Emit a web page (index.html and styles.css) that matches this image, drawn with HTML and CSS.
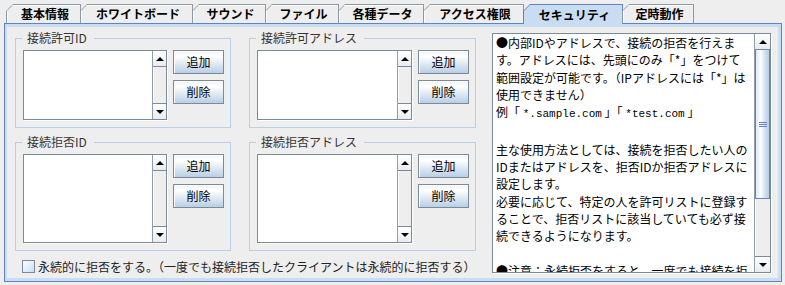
FILE: index.html
```html
<!DOCTYPE html>
<html lang="ja">
<head>
<meta charset="utf-8">
<title>セキュリティ</title>
<link rel="stylesheet" href="styles.css">
</head>
<body>
<div class="tabs">
  <div class="tab t1"><span>基本情報</span></div>
  <div class="tab t2"><span>ホワイトボード</span></div>
  <div class="tab t3"><span>サウンド</span></div>
  <div class="tab t4"><span>ファイル</span></div>
  <div class="tab t5"><span>各種データ</span></div>
  <div class="tab t6"><span>アクセス権限</span></div>
  <div class="tab t7 sel"><span>セキュリティ</span></div>
  <div class="tab t8"><span>定時動作</span></div>
</div>
<div class="panel">
  <div class="left">
    <div class="grid">
      <fieldset class="group">
        <legend>接続許可ID</legend>
        <div class="list">
          <div class="list-body"></div>
          <div class="vscroll"><div class="sb-btn"><i class="up"></i></div><div class="sb-track"></div><div class="sb-btn down-btn"><i class="down"></i></div></div>
        </div>
        <div class="btns"><button class="btn">追加</button><button class="btn">削除</button></div>
      </fieldset>
      <fieldset class="group">
        <legend>接続許可アドレス</legend>
        <div class="list">
          <div class="list-body"></div>
          <div class="vscroll"><div class="sb-btn"><i class="up"></i></div><div class="sb-track"></div><div class="sb-btn down-btn"><i class="down"></i></div></div>
        </div>
        <div class="btns"><button class="btn">追加</button><button class="btn">削除</button></div>
      </fieldset>
      <fieldset class="group">
        <legend>接続拒否ID</legend>
        <div class="list">
          <div class="list-body"></div>
          <div class="vscroll"><div class="sb-btn"><i class="up"></i></div><div class="sb-track"></div><div class="sb-btn down-btn"><i class="down"></i></div></div>
        </div>
        <div class="btns"><button class="btn">追加</button><button class="btn">削除</button></div>
      </fieldset>
      <fieldset class="group">
        <legend>接続拒否アドレス</legend>
        <div class="list">
          <div class="list-body"></div>
          <div class="vscroll"><div class="sb-btn"><i class="up"></i></div><div class="sb-track"></div><div class="sb-btn down-btn"><i class="down"></i></div></div>
        </div>
        <div class="btns"><button class="btn">追加</button><button class="btn">削除</button></div>
      </fieldset>
    </div>
    <label class="check"><span class="cb"></span><span class="check-text">永続的に拒否をする。（一度でも接続拒否したクライアントは永続的に拒否する）</span></label>
  </div>
  <div class="memo">
    <div class="memo-text">
      <div>●内部IDやアドレスで、接続の拒否を行えま</div>
      <div>す。アドレスには、先頭にのみ「*」をつけて</div>
      <div>範囲設定が可能です。（IPアドレスには「*」は</div>
      <div>使用できません）</div>
      <div>例「&nbsp;<span class="mono">*.sample.com</span>&nbsp;」「&nbsp;<span class="mono">*test.com</span>&nbsp;」</div>
      <div>&nbsp;</div>
      <div>主な使用方法としては、接続を拒否したい人の</div>
      <div>IDまたはアドレスを、拒否IDか拒否アドレスに</div>
      <div>設定します。</div>
      <div>必要に応じて、特定の人を許可リストに登録す</div>
      <div>ることで、拒否リストに該当していても必ず接</div>
      <div>続できるようになります。</div>
      <div>&nbsp;</div>
      <div>●注意：永続拒否をすると、一度でも接続を拒</div>
    </div>
    <div class="vscroll big">
      <div class="sb-btn"><i class="up"></i></div>
      <div class="thumb"><span class="grip"></span></div>
      <div class="sb-track"></div>
      <div class="sb-btn down-btn"><i class="down"></i></div>
    </div>
  </div>
</div>
</body>
</html>
```
FILE: styles.css
```css
* { box-sizing: border-box; }
html, body { margin: 0; padding: 0; background: #eeeeee; }
body {
  font-family: "Noto Sans CJK JP", "Noto Sans", sans-serif;
  font-size: 12px;
  color: #000;
  width: 785px;
  height: 285px;
  overflow: hidden;
}

/* ---------- tabs ---------- */
.tabs {
  display: flex;
  height: 23px;
  padding: 4px 0 0 6px;
  position: relative;
  z-index: 1;
}
.tab {
  height: 19px;
  margin-left: -1px;
  padding: 1px 1px 0 1px;
  background: #8a99aa;
  clip-path: polygon(0 7px, 7px 0, 100% 0, 100% 100%, 0 100%);
  font-weight: bold;
  font-size: 12px;
}
.tab:first-child { margin-left: 0; }
.tab span {
  display: flex;
  align-items: center;
  justify-content: center;
  height: 100%;
  padding-left: 3px;
  line-height: 1;
  background: #eeeeee;
  box-shadow: inset 1px 1px 0 #ffffff;
  clip-path: polygon(0 6px, 6px 0, 100% 0, 100% 100%, 0 100%);
}
.tab.sel { height: 20px; background: #6382bf; }
.tab.sel span { background: #c8ddf2; box-shadow: none; }
.t1 { width: 75px; }
.t2 { width: 113px; }
.t3 { width: 74px; }
.t4 { width: 74px; }
.t5 { width: 86px; }
.t6 { width: 101px; }
.t7 { width: 100px; }
.t8 { width: 72px; }

/* ---------- panel ---------- */
.panel {
  display: flex;
  width: 778px;
  height: 259px;
  margin-left: 4px;
  padding: 7px 0 0 10px;
  border: 1px solid #6382bf;
  box-shadow: inset 2px 3px 0 #c8ddf2, inset -3px -3px 0 #c8ddf2;
}
.left { width: 461px; display: flex; flex-direction: column; }
.grid {
  display: grid;
  grid-template-columns: 216px 227px;
  grid-template-rows: 97px 116px;
  column-gap: 18px;
  row-gap: 7px;
}
.group {
  margin: 0;
  min-width: 0;
  display: flex;
  padding: 5px 6px 7px 7px;
  border: 1px solid #b8cfe5;
}
.group legend {
  margin-left: -1px;
  padding: 0 7px 0 5px;
  font-size: 12px;
  line-height: 14px;
  color: #333333;
}

/* list with scrollbar */
.list {
  flex: 1;
  display: flex;
  background: #ffffff;
  border: 1px solid #7a8a99;
  box-shadow: 1px 1px 0 #ffffff;
  margin-right: 6px;
}
.list-body { flex: 1; }
.vscroll {
  width: 14px;
  display: flex;
  flex-direction: column;
  background: #eeeeee;
  border-left: 1px solid #8d9dad;
}
.sb-btn {
  height: 16px;
  display: flex;
  align-items: center;
  justify-content: center;
  background: linear-gradient(#ffffff, #e8ecf0);
  border-bottom: 1px solid #7a8a99;
}
.sb-btn.down-btn { border-bottom: 0; border-top: 1px solid #7a8a99; }
.sb-track { flex: 1; box-shadow: inset 1px 0 0 #ffffff; }
.up, .down {
  display: block;
  width: 0;
  height: 0;
  border-left: 4px solid transparent;
  border-right: 4px solid transparent;
}
.up { border-bottom: 4px solid #000; }
.down { border-top: 4px solid #000; }

.btns { width: 51px; display: flex; flex-direction: column; gap: 6px; }
.btn {
  height: 24px;
  width: 51px;
  padding: 0;
  margin: 0;
  border: 1px solid #7a8a99;
  background: linear-gradient(#eef3f9 0%, #ffffff 25%, #dde8f3 60%, #b8cfe5 100%);
  box-shadow: inset 1px 1px 0 #ffffff;
  font-family: "Noto Sans CJK JP", "Noto Sans", sans-serif;
  font-size: 12px;
  color: #000;
  line-height: 22px;
}

/* checkbox row */
.check {
  display: flex;
  align-items: center;
  margin: 9px 0 0 7px;
  height: 13px;
  color: #222222;
}
.cb {
  width: 13px;
  height: 13px;
  border: 1px solid #7a8a99;
  background: linear-gradient(135deg, #ffffff, #c8ddf2);
  margin-right: 3px;
}
.check-text { white-space: nowrap; line-height: 13px; }

/* memo text area */
.memo {
  display: flex;
  width: 279px;
  height: 240px;
  margin: 2px 0 0 16px;
  background: #ffffff;
  border: 1px solid #7a8a99;
  box-shadow: 1px 1px 0 #ffffff;
}
.memo-text {
  flex: 1;
  overflow: hidden;
  padding: 0 0 0 3px;
  white-space: nowrap;
  font-size: 12px;
  line-height: 17.3px;
  color: #000;
}
.mono { font-family: "Liberation Mono", "DejaVu Sans Mono", monospace; font-size: 11px; }
.vscroll.big { width: 16px; }
.thumb {
  height: 149px;
  display: flex;
  align-items: center;
  justify-content: center;
  border: 1px solid #6382bf;
  border-top: 0;
  background: linear-gradient(to right, #dde8f3, #ffffff 35%, #c8ddf2 75%, #b8cfe5);
}
.grip {
  width: 8px;
  height: 5px;
  background: repeating-linear-gradient(#6382bf 0 1px, transparent 1px 2px);
}
```
